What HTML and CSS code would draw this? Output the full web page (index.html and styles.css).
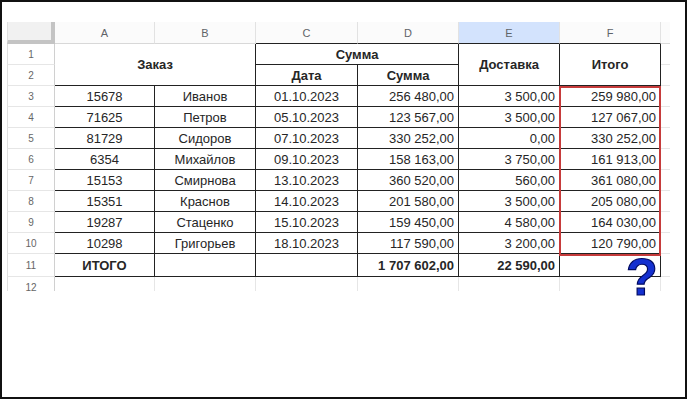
FILE: index.html
```html
<!DOCTYPE html>
<html lang="ru">
<head>
<meta charset="utf-8">
<title>Таблица заказов</title>
<link rel="stylesheet" href="styles.css">
</head>
<body>
<div class="frame">
  <div class="sheet-wrap">
    <div class="sheet">
      <div class="corner"></div>
      <div class="ch">A</div>
      <div class="ch">B</div>
      <div class="ch">C</div>
      <div class="ch">D</div>
      <div class="ch sel">E</div>
      <div class="ch">F</div>
      <div class="ch gx"></div>

      <div class="rn">1</div>
      <div class="c hd zakaz">Заказ</div>
      <div class="c hd summa-top">Сумма</div>
      <div class="c hd tall">Доставка</div>
      <div class="c hd tall">Итого</div>
      <div class="gx"></div>

      <div class="rn">2</div>
      <div class="c hd">Дата</div>
      <div class="c hd">Сумма</div>
      <div class="gx"></div>

      <div class="rn">3</div><div class="c">15678</div><div class="c">Иванов</div><div class="c">01.10.2023</div><div class="c r">256 480,00</div><div class="c r">3 500,00</div><div class="c r">259 980,00</div><div class="gx"></div>
      <div class="rn">4</div><div class="c">71625</div><div class="c">Петров</div><div class="c">05.10.2023</div><div class="c r">123 567,00</div><div class="c r">3 500,00</div><div class="c r">127 067,00</div><div class="gx"></div>
      <div class="rn">5</div><div class="c">81729</div><div class="c">Сидоров</div><div class="c">07.10.2023</div><div class="c r">330 252,00</div><div class="c r">0,00</div><div class="c r">330 252,00</div><div class="gx"></div>
      <div class="rn">6</div><div class="c">6354</div><div class="c">Михайлов</div><div class="c">09.10.2023</div><div class="c r">158 163,00</div><div class="c r">3 750,00</div><div class="c r">161 913,00</div><div class="gx"></div>
      <div class="rn">7</div><div class="c">15153</div><div class="c">Смирнова</div><div class="c">13.10.2023</div><div class="c r">360 520,00</div><div class="c r">560,00</div><div class="c r">361 080,00</div><div class="gx"></div>
      <div class="rn">8</div><div class="c">15351</div><div class="c">Краснов</div><div class="c">14.10.2023</div><div class="c r">201 580,00</div><div class="c r">3 500,00</div><div class="c r">205 080,00</div><div class="gx"></div>
      <div class="rn">9</div><div class="c">19287</div><div class="c">Стаценко</div><div class="c">15.10.2023</div><div class="c r">159 450,00</div><div class="c r">4 580,00</div><div class="c r">164 030,00</div><div class="gx"></div>
      <div class="rn">10</div><div class="c">10298</div><div class="c">Григорьев</div><div class="c">18.10.2023</div><div class="c r">117 590,00</div><div class="c r">3 200,00</div><div class="c r">120 790,00</div><div class="gx"></div>

      <div class="rn">11</div><div class="c b">ИТОГО</div><div class="c"></div><div class="c"></div><div class="c r b">1 707 602,00</div><div class="c r b">22 590,00</div><div class="c"></div><div class="gx"></div>

      <div class="rn">12</div><div class="e"></div><div class="e"></div><div class="e"></div><div class="e"></div><div class="e"></div><div class="e"></div><div class="gx"></div>
    </div>
    <div class="red-box"></div>
    <div class="question">?</div>
  </div>
</div>
</body>
</html>
```

FILE: styles.css
```css
html, body {
  margin: 0;
  padding: 0;
  background: #fff;
}

.frame {
  box-sizing: border-box;
  width: 687px;
  height: 399px;
  border: 2px solid #111;
  padding: 20px 0 0 5px;
  background: #fff;
  font-family: "Liberation Sans", Arial, sans-serif;
}

.sheet-wrap {
  position: relative;
  width: 663px;
}

.sheet {
  display: grid;
  grid-template-columns: 48px 100px 101px 102px 101px 101px 101px 9px;
  grid-template-rows: 22px repeat(10, 21px) 23px 21px;
  height: 269px;
  overflow: hidden;
  color: #262626;
  font-size: 13px;
}

.sheet > div {
  box-sizing: border-box;
  display: flex;
  align-items: center;
  justify-content: center;
  white-space: nowrap;
  overflow: hidden;
}

.corner {
  background: #f1f1f1;
  border-right: 4px solid #c4c4c4;
  border-bottom: 4px solid #c4c4c4;
  border-left: 1px solid #e0e0e0;
}

.ch {
  background: #fbfbfb;
  color: #5f6368;
  font-size: 11px;
  border-right: 1px solid #e2e2e2;
  border-bottom: 1px solid #222;
}

.ch:nth-child(2),
.ch:nth-child(3) {
  border-bottom-color: #d8d8d8;
}

.ch.sel {
  background: #d3e3fd;
}

.ch.gx {
  border-right: none;
  border-bottom-color: #dadada;
}

.rn {
  color: #666;
  font-size: 10px;
  background: #fff;
  border-left: 1px solid #e0e0e0;
  border-right: 1px solid #d0d0d0;
  border-bottom: 1px solid #e6e6e6;
}

.rn:last-of-type {
  align-items: flex-start;
  padding-top: 3px;
}

.c {
  border-right: 1px solid #222;
  border-bottom: 1px solid #222;
  padding: 0 4px;
}

.c.r {
  justify-content: flex-end;
}

.c.b,
.c.hd {
  font-weight: bold;
}

.zakaz {
  grid-column: span 2;
  grid-row: span 2;
}

.summa-top {
  grid-column: span 2;
}

.tall {
  grid-row: span 2;
}

.gx {
  border-bottom: 1px solid #e6e6e6;
}

.e {
  border-right: 1px solid #e6e6e6;
}

.red-box {
  position: absolute;
  left: 552px;
  top: 64px;
  width: 102px;
  height: 170px;
  box-sizing: border-box;
  border: 2px solid #c63b3b;
  pointer-events: none;
}

.question {
  position: absolute;
  left: 619px;
  top: 235px;
  font-family: "Liberation Sans", Arial, sans-serif;
  font-weight: bold;
  font-size: 52px;
  line-height: 40px;
  color: #1430d0;
  -webkit-text-stroke: 1.2px #000a60;
}
```
